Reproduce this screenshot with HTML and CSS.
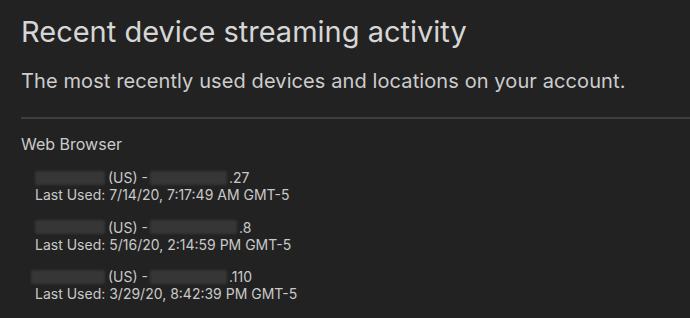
FILE: index.html
```html
<!DOCTYPE html>
<html>
<head>
<meta charset="utf-8">
<link rel="stylesheet" href="styles.css">
</head>
<body>
<div class="page">
  <h1 class="title">Recent device streaming activity</h1>
  <p class="subtitle">The most recently used devices and locations on your account.</p>
  <hr class="divider">
  <div class="device">Web Browser</div>
  <ul class="sessions">
    <li class="session">
      <div class="loc"><span class="redact r1"></span><span>(US) -</span><span class="redact r2"></span><span>.27</span></div>
      <div class="when">Last Used: 7/14/20, 7:17:49 AM GMT-5</div>
    </li>
    <li class="session">
      <div class="loc"><span class="redact r1"></span><span>(US) -</span><span class="redact r3"></span><span>.8</span></div>
      <div class="when">Last Used: 5/16/20, 2:14:59 PM GMT-5</div>
    </li>
    <li class="session">
      <div class="loc"><span class="redact r1 r1-wide"></span><span>(US) -</span><span class="redact r2"></span><span>.110</span></div>
      <div class="when">Last Used: 3/29/20, 8:42:39 PM GMT-5</div>
    </li>
  </ul>
</div>
</body>
</html>
```
FILE: styles.css
```css
html, body {
  margin: 0;
  padding: 0;
  background: #222222;
}
body {
  font-family: "Inter", "Liberation Sans", sans-serif;
  color: #d2d2d2;
  width: 690px;
  height: 318px;
  overflow: hidden;
}
.page {
  padding: 14px 0 0 21px;
}
.title {
  margin: 0;
  font-size: 29px;
  font-weight: 400;
  line-height: 36px;
  color: #d6d6d6;
}
.subtitle {
  margin: 19px 0 0;
  font-size: 20px;
  line-height: 24px;
  letter-spacing: 0.1px;
  color: #cdcdcd;
}
.divider {
  margin: 24px 0 0;
  border: 0;
  height: 2px;
  background: #3e3e3e;
}
.device {
  margin-top: 15px;
  font-size: 16px;
  line-height: 20px;
  color: #cbcbcb;
}
.sessions {
  list-style: none;
  margin: 15px 0 0;
  padding: 0 0 0 14px;
  display: flex;
  flex-direction: column;
  gap: 15.5px;
}
.session {
  font-size: 14px;
  line-height: 17px;
  color: #c9c9c9;
}
.loc {
  display: flex;
  align-items: center;
}
.redact {
  display: inline-block;
  height: 14px;
  background: #363636;
  border-radius: 2px;
  filter: blur(1px);
}
.r1 { width: 70px; margin-right: 3px; }
.r1-wide { width: 74px; margin-left: -4px; }
.r2 { width: 77px; margin-left: 2px; margin-right: 2px; }
.r3 { width: 87px; margin-left: 2px; margin-right: 2px; }
.when {
  white-space: nowrap;
}
```
